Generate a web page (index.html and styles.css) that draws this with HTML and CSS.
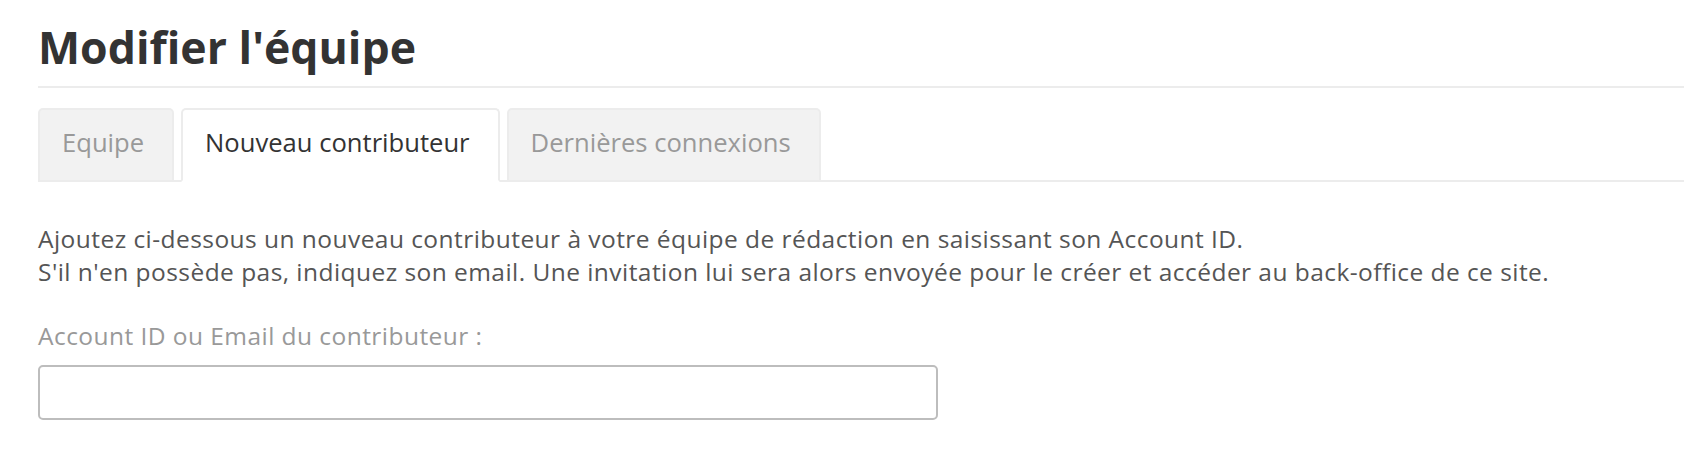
FILE: index.html
```html
<!DOCTYPE html>
<html lang="fr">
<head>
<meta charset="utf-8">
<title>Modifier l'équipe</title>
<link rel="stylesheet" href="styles.css">
</head>
<body>
<div class="page">
  <h1 class="title">Modifier l'équipe</h1>
  <ul class="tabs">
    <li class="tab">Equipe</li>
    <li class="tab tab-active">Nouveau contributeur</li>
    <li class="tab">Dernières connexions</li>
  </ul>
  <div class="pane">
    <p class="intro">Ajoutez ci-dessous un nouveau contributeur à votre équipe de rédaction en saisissant son Account ID.<br>S'il n'en possède pas, indiquez son email. Une invitation lui sera alors envoyée pour le créer et accéder au back-office de ce site.</p>
    <label class="field-label" for="contrib">Account ID ou Email du contributeur :</label>
    <input class="field-input" id="contrib" type="text">
  </div>
</div>
</body>
</html>
```

FILE: styles.css
```css
html, body {
  margin: 0;
  padding: 0;
  background: #ffffff;
}

body {
  font-family: "Open Sans", "DejaVu Sans", sans-serif;
  color: #555555;
}

.page {
  padding-left: 38px;
}

.title {
  margin: 22px 0 0;
  padding-bottom: 14px;
  border-bottom: 2px solid #ececec;
  font-size: 44.6px;
  line-height: 50px;
  font-weight: 700;
  color: #333333;
}

.tabs {
  display: flex;
  gap: 7px;
  list-style: none;
  margin: 20px 0 0;
  padding: 0;
  border-bottom: 2px solid #ececec;
}

.tab {
  margin-bottom: -2px;
  padding: 15px 28px 19px 22px;
  font-size: 25.6px;
  line-height: 36px;
  color: #999999;
  background: #f2f2f2;
  border: 2px solid #ececec;
  border-bottom-color: #ececec;
  border-radius: 5px 5px 0 0;
}

.tab-active {
  background: #ffffff;
  color: #333333;
  border-bottom-color: #ffffff;
}

.pane {
  display: flex;
  flex-direction: column;
  align-items: flex-start;
}

.intro {
  margin: 40px 0 0;
  font-size: 24.5px;
  letter-spacing: 0.45px;
  line-height: 33px;
  color: #555555;
}

.field-label {
  margin-top: 31px;
  font-size: 24.5px;
  letter-spacing: 0.45px;
  line-height: 33px;
  color: #999999;
}

.field-input {
  box-sizing: border-box;
  margin-top: 13px;
  width: 900px;
  height: 55px;
  border: 2px solid #bdbdbd;
  border-radius: 5px;
  background: #ffffff;
  font-family: inherit;
  font-size: 22.4px;
  padding: 0 12px;
  outline: none;
}
```
